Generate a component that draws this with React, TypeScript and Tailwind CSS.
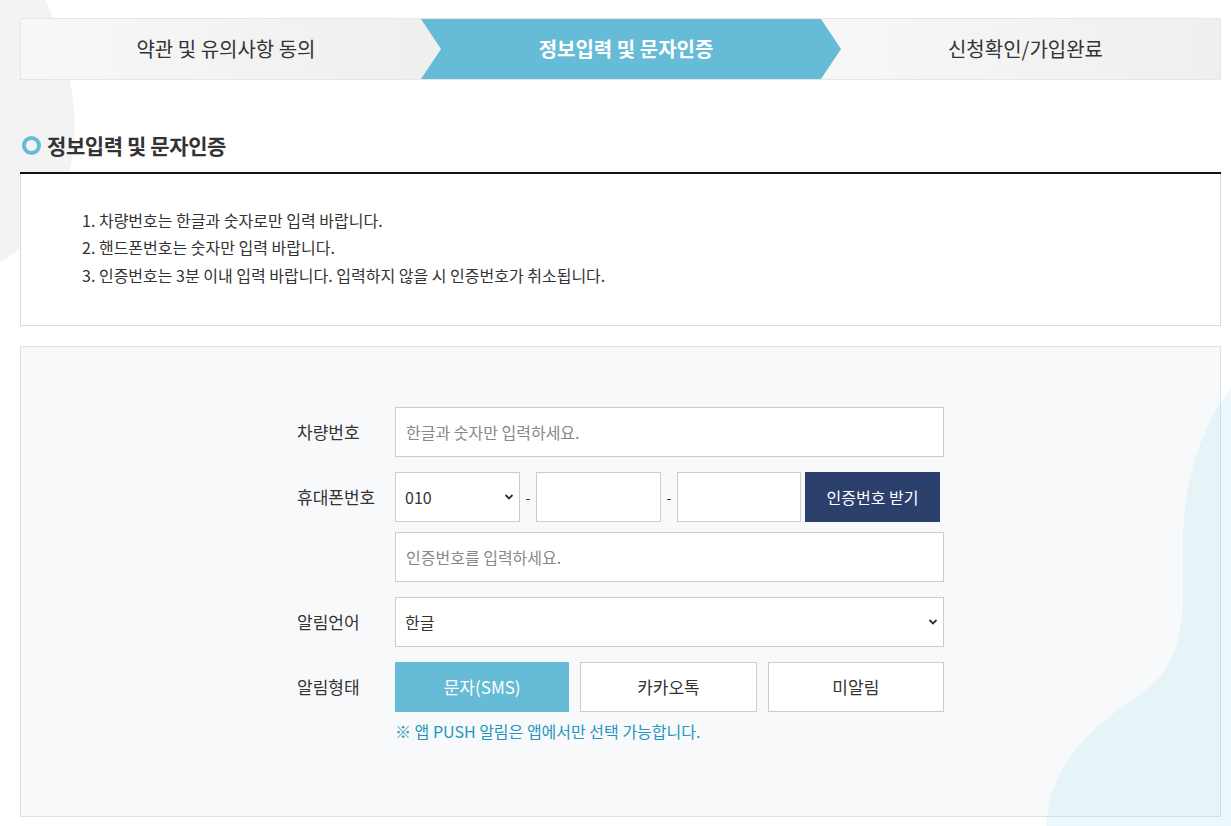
import React from 'react';

const font = { fontFamily: '"Noto Sans CJK KR", "Noto Sans", sans-serif' };

const Chevron: React.FC = () => (
  <svg width="10" height="7" viewBox="0 0 10 7" className="pointer-events-none absolute right-[6px] top-1/2 -translate-y-1/2">
    <path d="M1.5 1.5 L5 5 L8.5 1.5" fill="none" stroke="#333" strokeWidth="1.8" />
  </svg>
);

const App: React.FC = () => {
  return (
    <div className="relative min-h-[826px] w-full overflow-hidden bg-white text-[#333]" style={font}>
      {/* background shapes */}
      <svg className="absolute left-0 top-0" width="120" height="280" viewBox="0 0 120 280">
        <path d="M0 0 L46 0 C70 60 82 120 70 170 C58 215 32 245 0 262 Z" fill="#f3f3f3" />
      </svg>

      <div className="relative px-[20px] pt-[18px] pr-[10px]">
        {/* steps */}
        <div className="flex h-[62px] border border-[#e6e6e6]">
          <div className="flex w-[400px] items-center justify-center bg-gradient-to-r from-[#f8f8f8] to-[#efefef] pl-[10px] text-[20px]">
            약관 및 유의사항 동의
          </div>
          <div className="relative w-[420px] bg-[linear-gradient(90deg,#efefef_50%,#f7f7f7_50%)]">
            <div className="absolute inset-0 flex items-center justify-center bg-[#66bcd6] pr-[10px] text-[20px] font-bold text-white [clip-path:polygon(0_0,400px_0,420px_50%,400px_100%,0_100%,20px_50%)]">
              정보입력 및 문자인증
            </div>
          </div>
          <div className="flex flex-1 items-center justify-center bg-gradient-to-r from-[#f7f7f7] to-[#efefef] pr-[10px] text-[20px]">
            신청확인/가입완료
          </div>
        </div>

        {/* title */}
        <div className="mt-[50px] flex items-center gap-[6px] pl-[2px]">
          <span className="h-[19px] w-[19px] rounded-full border-[4.5px] border-[#66bcd6]" />
          <h2 className="text-[21px] font-bold tracking-[-0.4px]">정보입력 및 문자인증</h2>
        </div>

        {/* notice */}
        <div className="mt-[10px] border-t-2 border-[#111]">
          <div className="border-x border-b border-[#dcdcdc] bg-white pl-[61px] pt-[33px] pb-[36px] text-[16px] leading-[27.5px]">
            <p>1. 차량번호는 한글과 숫자로만 입력 바랍니다.</p>
            <p>2. 핸드폰번호는 숫자만 입력 바랍니다.</p>
            <p>3. 인증번호는 3분 이내 입력 바랍니다. 입력하지 않을 시 인증번호가 취소됩니다.</p>
          </div>
        </div>

        {/* form */}
        <div className="mt-[20px] h-[471px] border border-[#d9e2e6] bg-[#f8f9fb] pl-[276px] pt-[60px]">
          <div className="flex w-[647px] flex-col text-[17px]">
            <div className="flex items-center">
              <label className="w-[98px]">차량번호</label>
              <input
                className="h-[50px] flex-1 border border-[#cccccc] bg-white px-[10px] text-[16px] outline-none placeholder:text-[#888]"
                placeholder="한글과 숫자만 입력하세요."
              />
            </div>

            <div className="mt-[15px] flex items-center">
              <label className="w-[98px]">휴대폰번호</label>
              <div className="relative h-[50px] w-[125px]">
                <select className="h-full w-full appearance-none border border-[#cccccc] bg-white px-[9px] text-[16px] outline-none">
                  <option>010</option>
                  <option>011</option>
                  <option>016</option>
                </select>
                <Chevron />
              </div>
              <span className="w-[16px] text-center text-[14px]">-</span>
              <input className="h-[50px] w-[125px] border border-[#cccccc] bg-white outline-none" />
              <span className="w-[16px] text-center text-[14px]">-</span>
              <input className="h-[50px] w-[124px] border border-[#cccccc] bg-white outline-none" />
              <button className="ml-[4px] h-[50px] w-[135px] bg-[#2c406e] text-[16px] text-white">인증번호 받기</button>
            </div>

            <div className="mt-[10px] flex items-center">
              <span className="w-[98px]" />
              <input
                className="h-[50px] flex-1 border border-[#cccccc] bg-white px-[10px] text-[16px] outline-none placeholder:text-[#888]"
                placeholder="인증번호를 입력하세요."
              />
            </div>

            <div className="mt-[15px] flex items-center">
              <label className="w-[98px]">알림언어</label>
              <div className="relative h-[50px] flex-1">
                <select className="h-full w-full appearance-none border border-[#cccccc] bg-white px-[9px] text-[16px] outline-none">
                  <option>한글</option>
                  <option>English</option>
                </select>
                <Chevron />
              </div>
            </div>

            <div className="mt-[15px] flex items-center">
              <label className="w-[98px]">알림형태</label>
              <div className="flex flex-1 gap-[11px]">
                <button className="h-[50px] flex-1 bg-[#66bcd6] text-[17px] text-white">문자(SMS)</button>
                <button className="h-[50px] flex-1 border border-[#cccccc] bg-white text-[17px]">카카오톡</button>
                <button className="h-[50px] flex-1 border border-[#cccccc] bg-white text-[17px]">미알림</button>
              </div>
            </div>

            <p className="mt-[7px] pl-[98px] text-[16px] text-[#2496bd]">※ 앱 PUSH 알림은 앱에서만 선택 가능합니다.</p>
          </div>
        </div>
      </div>

      {/* bottom-right wave */}
      <svg className="pointer-events-none absolute right-0 top-[380px]" width="200" height="446" viewBox="1031 380 200 446">
        <path
          d="M1231 387 C1200 430 1184 480 1183 540 C1182 600 1192 660 1140 694 C1080 735 1050 770 1046 826 L1231 826 Z"
          fill="rgba(140,215,232,0.17)"
        />
      </svg>
    </div>
  );
};

export default App;
